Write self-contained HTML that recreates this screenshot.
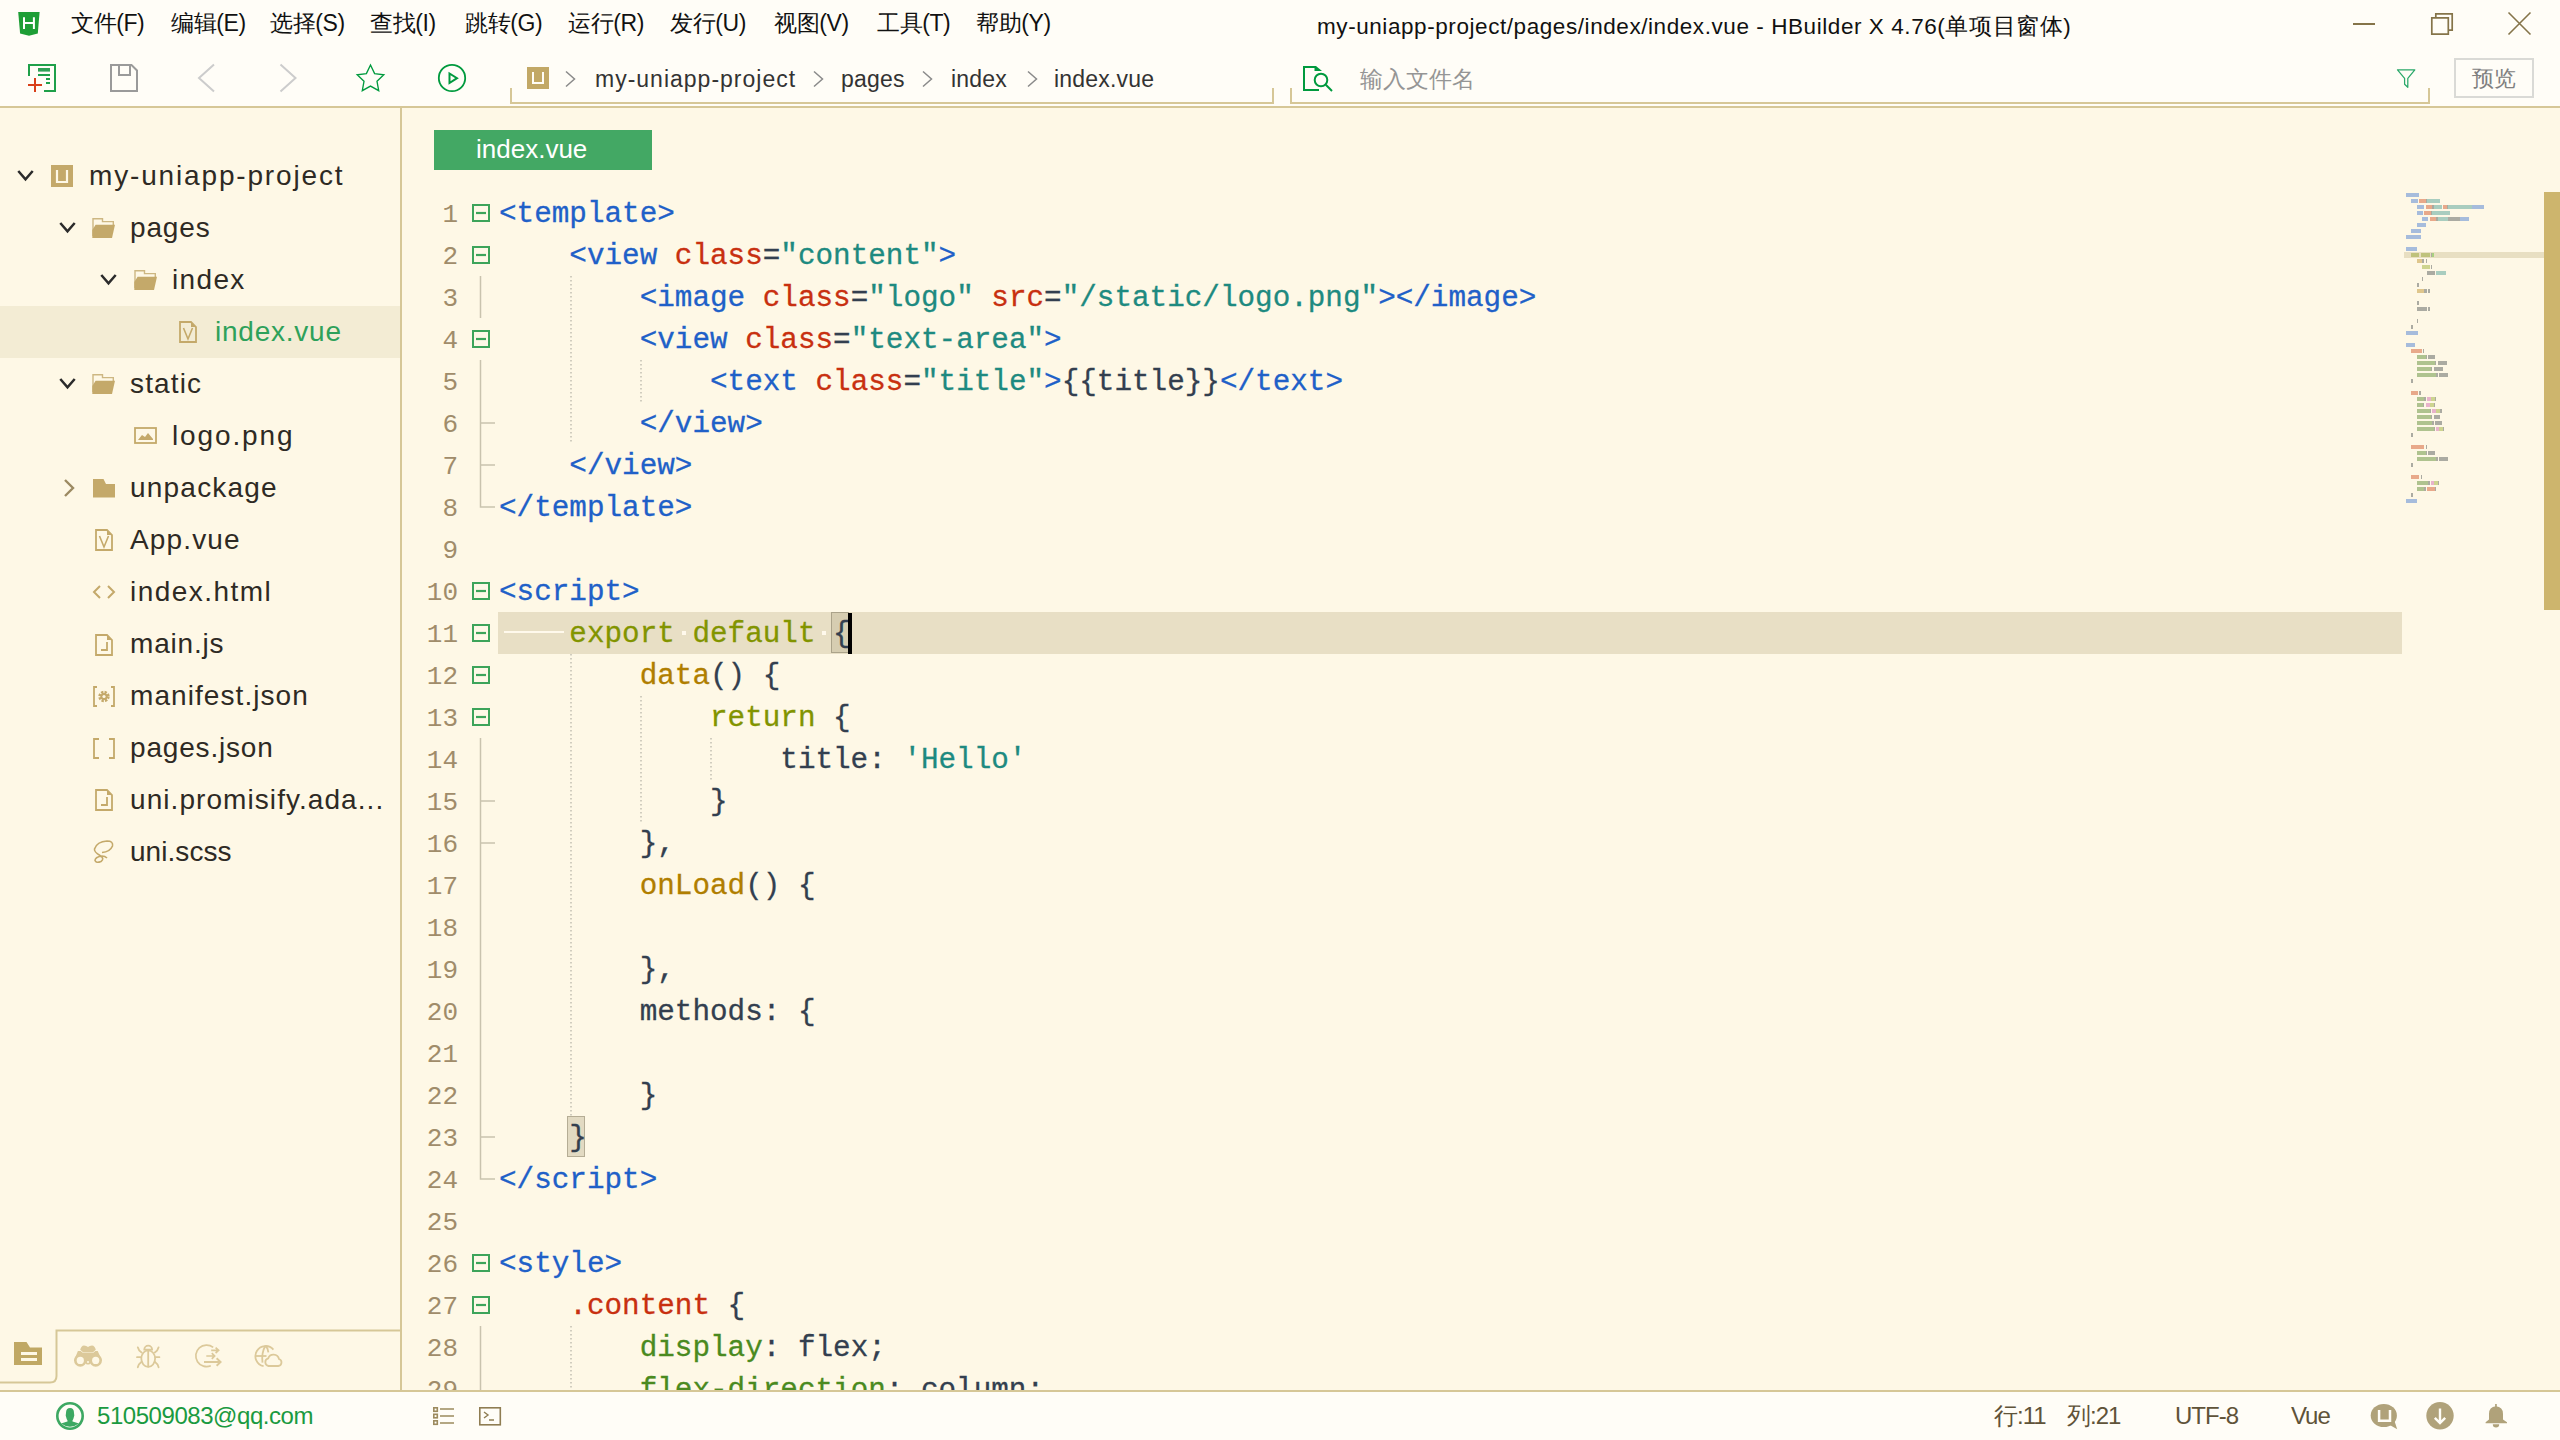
<!DOCTYPE html><html><head><meta charset="utf-8"><style>
*{margin:0;padding:0;box-sizing:border-box}
html,body{width:2560px;height:1440px;overflow:hidden}
body{position:relative;background:#FFFDF7;font-family:"Liberation Sans",sans-serif;color:#222}
.a{position:absolute;white-space:pre}
svg{position:absolute;overflow:visible}
.menu{font-size:23px;line-height:30px;color:#111;top:8px;letter-spacing:-0.4px}
.code{position:absolute;white-space:pre;font-family:"Liberation Mono",monospace;font-size:29.3px;line-height:42px;left:499px;top:0;height:42px;padding-top:2px;-webkit-text-stroke:0.3px currentColor}
.ln{position:absolute;white-space:pre;font-family:"Liberation Mono",monospace;font-size:26px;line-height:42px;color:#A08C6A;text-align:right;width:80px;left:378px;padding-top:2px}
.tree{position:absolute;white-space:pre;font-size:28px;line-height:52px;color:#2E2A24;height:52px}
.tg{color:#2060C8}.at{color:#C83010}.st{color:#1E8A80}.pn{color:#333F4F}.kw{color:#829400}.fn{color:#B07E00}.pl{color:#333F4F}.cp{color:#4A8A20}
</style></head><body><div class="a" style="left:0;top:108px;width:2560px;height:1282px;background:#FEF8E6"></div><div class="a" style="left:0;top:106px;width:2560px;height:2px;background:#D6C797"></div><div class="a" style="left:400px;top:108px;width:2px;height:1282px;background:#D6C797"></div><div class="a" style="left:0;top:1390px;width:2560px;height:2px;background:#D6C797"></div><svg style="left:0;top:0" width="60" height="50"><path d="M18.2 12.1 L39.6 12.1 L37.8 33.6 L29 35.8 L20.1 33.6 Z" fill="#1E9E36"/><path d="M24 17.2 V28.9 M33.9 17.2 V28.9 M24 23.1 H33.9" stroke="#fff" stroke-width="2" fill="none"/></svg><div class="a menu" style="left:71px">文件(F)</div><div class="a menu" style="left:171px">编辑(E)</div><div class="a menu" style="left:270px">选择(S)</div><div class="a menu" style="left:370px">查找(I)</div><div class="a menu" style="left:465px">跳转(G)</div><div class="a menu" style="left:568px">运行(R)</div><div class="a menu" style="left:670px">发行(U)</div><div class="a menu" style="left:774px">视图(V)</div><div class="a menu" style="left:877px">工具(T)</div><div class="a menu" style="left:976px">帮助(Y)</div><div class="a" style="left:1317px;top:11.5px;font-size:22.5px;line-height:30px;color:#111;letter-spacing:0.57px">my-uniapp-project/pages/index/index.vue - HBuilder X 4.76(单项目窗体)</div><svg style="left:0;top:0" width="2560" height="50"><path d="M2353 24 H2375" stroke="#857449" stroke-width="2"/><path d="M2431.8 17.8 H2448.3 V34.2 H2431.8 Z" stroke="#857449" stroke-width="1.7" fill="none"/><path d="M2435.8 17.8 V13.8 H2452.2 V30.2 H2448.3" stroke="#857449" stroke-width="1.7" fill="none"/><path d="M2508.5 12.5 L2530.5 34.5 M2530.5 12.5 L2508.5 34.5" stroke="#857449" stroke-width="1.6"/></svg><svg style="left:0;top:0" width="2560" height="106"><path d="M29 76 V65 H55 V91 H44" stroke="#1FA04A" stroke-width="2" fill="none"/><rect x="38" y="68" width="12" height="3.6" fill="#2EA055"/><rect x="38" y="74" width="12" height="2" fill="#1FA04A"/><rect x="46" y="78" width="4" height="2" fill="#1FA04A"/><rect x="46" y="82" width="4" height="2" fill="#1FA04A"/><path d="M28 85 H42 M35 78 V92" stroke="#D9401A" stroke-width="2"/><path d="M111 65 H131.5 L137 70.5 V91 H111 Z" stroke="#9A9A9A" stroke-width="2" fill="none"/><path d="M119 65 V75 H130 V65" stroke="#9A9A9A" stroke-width="2" fill="none"/><path d="M214 64.5 L199 78 L214 91.5" stroke="#CCCCCC" stroke-width="2" fill="none"/><path d="M280.5 64.5 L295.5 78 L280.5 91.5" stroke="#CCCCCC" stroke-width="2" fill="none"/><path d="M370.5 65 L374.6 73.6 L383.8 74.8 L377 81.3 L378.7 90.7 L370.5 86.1 L362.3 90.7 L364 81.3 L357.2 74.8 L366.4 73.6 Z" stroke="#009A3E" stroke-width="1.35" fill="none" stroke-linejoin="miter"/><circle cx="452" cy="78" r="13.2" stroke="#009A3E" stroke-width="1.8" fill="none"/><path d="M449.5 73.5 V83 L457 78.2 Z" stroke="#009A3E" stroke-width="2" fill="none" stroke-linejoin="miter"/><path d="M511 88 V103 H1273 V88" stroke="#D6C797" stroke-width="2" fill="none"/><rect x="527" y="67" width="22" height="22" fill="#C2A866"/><path d="M533 72 V83 H543 V72" stroke="#FFFDF7" stroke-width="2" fill="none"/><path d="M1291 88 V103 H2429 V88" stroke="#D6C797" stroke-width="2" fill="none"/><path d="M1319 90 H1304 V67 H1315" stroke="#009A3E" stroke-width="2" fill="none"/><path d="M1314.5 66 H1316 L1322 71 H1314.5 Z" fill="#009A3E"/><circle cx="1321" cy="80" r="6.3" stroke="#009A3E" stroke-width="2" fill="none"/><path d="M1325.8 84.8 L1332 91" stroke="#009A3E" stroke-width="2"/><path d="M2397.5 69.8 H2414.8 L2407.8 78.3 V87.3 L2404.6 84.3 V78.3 Z" stroke="#2AA86A" stroke-width="1.25" fill="none" stroke-linejoin="round"/><rect x="2455" y="59" width="78" height="38" stroke="#DADAD6" stroke-width="2" fill="none"/></svg><svg style="left:0;top:0" width="10" height="10"><path d="M566.0 71.5 L574.5 79 L566.0 86.5" stroke="#8A8A8A" stroke-width="1.5" fill="none"/></svg><svg style="left:0;top:0" width="10" height="10"><path d="M814.0 71.5 L822.5 79 L814.0 86.5" stroke="#8A8A8A" stroke-width="1.5" fill="none"/></svg><svg style="left:0;top:0" width="10" height="10"><path d="M923.0 71.5 L931.5 79 L923.0 86.5" stroke="#8A8A8A" stroke-width="1.5" fill="none"/></svg><svg style="left:0;top:0" width="10" height="10"><path d="M1028.0 71.5 L1036.5 79 L1028.0 86.5" stroke="#8A8A8A" stroke-width="1.5" fill="none"/></svg><div class="a" style="left:595px;top:63.5px;font-size:23px;line-height:30px;color:#333;letter-spacing:1.00px">my-uniapp-project</div><div class="a" style="left:841px;top:63.5px;font-size:23px;line-height:30px;color:#333;letter-spacing:0.20px">pages</div><div class="a" style="left:951px;top:63.5px;font-size:23px;line-height:30px;color:#333;letter-spacing:0.20px">index</div><div class="a" style="left:1054px;top:63.5px;font-size:23px;line-height:30px;color:#333;letter-spacing:0.20px">index.vue</div><div class="a" style="left:1360px;top:65px;font-size:22.5px;line-height:30px;color:#959595">输入文件名</div><div class="a" style="left:2472px;top:64px;font-size:22px;line-height:30px;color:#808080">预览</div><div class="a" style="left:0;top:306px;width:400px;height:52px;background:#F3ECD4"></div><div class="tree" style="left:89px;top:150px;color:#2E2A24;letter-spacing:1.84px">my-uniapp-project</div><div class="tree" style="left:130px;top:202px;color:#2E2A24;letter-spacing:0.84px">pages</div><div class="tree" style="left:172px;top:254px;color:#2E2A24;letter-spacing:1.34px">index</div><div class="tree" style="left:215px;top:306px;color:#2EA15A;letter-spacing:0.77px">index.vue</div><div class="tree" style="left:130px;top:358px;color:#2E2A24;letter-spacing:1.15px">static</div><div class="tree" style="left:172px;top:410px;color:#2E2A24;letter-spacing:1.86px">logo.png</div><div class="tree" style="left:130px;top:462px;color:#2E2A24;letter-spacing:1.21px">unpackage</div><div class="tree" style="left:130px;top:514px;color:#2E2A24;letter-spacing:1.15px">App.vue</div><div class="tree" style="left:130px;top:566px;color:#2E2A24;letter-spacing:1.45px">index.html</div><div class="tree" style="left:130px;top:618px;color:#2E2A24;letter-spacing:0.82px">main.js</div><div class="tree" style="left:130px;top:670px;color:#2E2A24;letter-spacing:1.07px">manifest.json</div><div class="tree" style="left:130px;top:722px;color:#2E2A24;letter-spacing:0.82px">pages.json</div><div class="tree" style="left:130px;top:774px;color:#2E2A24;letter-spacing:1.07px">uni.promisify.ada...</div><div class="tree" style="left:130px;top:826px;color:#2E2A24;letter-spacing:0.05px">uni.scss</div><svg style="left:0;top:0" width="400" height="1000"><path d="M18.3 171.0 L25.5 179.4 L32.7 171.0" stroke="#2B2B2B" stroke-width="2.5" fill="none"/><rect x="51" y="165" width="22" height="22" fill="#C4A96A"/><path d="M57.0 170.0 V182.0 H67.0 V170.0" stroke="#FEF8E6" stroke-width="2.2" fill="none"/><path d="M60.3 223.0 L67.5 231.4 L74.7 223.0" stroke="#2B2B2B" stroke-width="2.5" fill="none"/><path d="M93.0 236.0 V218.7 H102.5 V221.6 H113.3 V225.0" stroke="#CDB782" stroke-width="1.4" fill="none"/><path d="M95.6 224.7 H115.0 L112.0 238.0 H92.3 V230.0 Z" fill="#C4A96A"/><path d="M101.3 275.0 L108.5 283.4 L115.7 275.0" stroke="#2B2B2B" stroke-width="2.5" fill="none"/><path d="M135.0 288.0 V270.7 H144.5 V273.6 H155.3 V277.0" stroke="#CDB782" stroke-width="1.4" fill="none"/><path d="M137.6 276.7 H157.0 L154.0 290.0 H134.3 V282.0 Z" fill="#C4A96A"/><path d="M180.0 322.0 H191.0 L196.0 327.0 V342.0 H180.0 Z" stroke="#C4A96A" stroke-width="1.8" fill="none"/><path d="M191.0 322.0 L196.0 327.0 H191.0 Z" fill="#C4A96A"/><path d="M183.5 328.0 L188.0 339.0 L192.5 328.0" stroke="#C4A96A" stroke-width="1.6" fill="none"/><path d="M60.3 379.0 L67.5 387.4 L74.7 379.0" stroke="#2B2B2B" stroke-width="2.5" fill="none"/><path d="M93.0 392.0 V374.7 H102.5 V377.6 H113.3 V381.0" stroke="#CDB782" stroke-width="1.4" fill="none"/><path d="M95.6 380.7 H115.0 L112.0 394.0 H92.3 V386.0 Z" fill="#C4A96A"/><rect x="135.0" y="428.0" width="21" height="15" stroke="#C4A96A" stroke-width="1.8" fill="none"/><path d="M138.0 440.0 L142.0 435.0 L145.0 437.0 L148.0 433.0 L153.0 439.0 V440.0 H138.0 Z" fill="#C4A96A"/><path d="M65.0 480.0 L73.0 488.0 L65.0 496.0" stroke="#9C8A62" stroke-width="2.4" fill="none"/><path d="M93.0 479.0 H103.5 L106.0 484.0 H115.0 V497.5 H93.0 Z" fill="#C4A96A"/><path d="M96.0 530.0 H107.0 L112.0 535.0 V550.0 H96.0 Z" stroke="#C4A96A" stroke-width="1.8" fill="none"/><path d="M107.0 530.0 L112.0 535.0 H107.0 Z" fill="#C4A96A"/><path d="M99.5 536.0 L104.0 547.0 L108.5 536.0" stroke="#C4A96A" stroke-width="1.6" fill="none"/><path d="M100.0 586.0 L94.0 592.0 L100.0 598.0 M108.0 586.0 L114.0 592.0 L108.0 598.0" stroke="#C4A96A" stroke-width="2" fill="none"/><path d="M96.0 635.0 H107.0 L112.0 640.0 V655.0 H96.0 Z" stroke="#C4A96A" stroke-width="1.8" fill="none"/><path d="M107.0 635.0 L112.0 640.0 H107.0 Z" fill="#C4A96A"/><path d="M107.0 642.0 V650.0 H101.0" stroke="#C4A96A" stroke-width="1.8" fill="none"/><path d="M97.0 687.0 H94.0 V706.0 H97.0 M111.0 687.0 H114.0 V706.0 H111.0" stroke="#C4A96A" stroke-width="1.8" fill="none"/><circle cx="104.0" cy="696.5" r="4.2" fill="none" stroke="#C4A96A" stroke-width="3" stroke-dasharray="2.2 1.1"/><circle cx="104.0" cy="696.5" r="3.6" fill="#C4A96A"/><circle cx="104.0" cy="696.5" r="1.6" fill="#FEF8E6"/><path d="M99.0 739.0 H94.0 V758.0 H99.0 M109.0 739.0 H114.0 V758.0 H109.0" stroke="#C4A96A" stroke-width="1.8" fill="none"/><path d="M96.0 790.0 H107.0 L112.0 795.0 V810.0 H96.0 Z" stroke="#C4A96A" stroke-width="1.8" fill="none"/><path d="M107.0 790.0 L112.0 795.0 H107.0 Z" fill="#C4A96A"/><path d="M107.0 797.0 V805.0 H101.0" stroke="#C4A96A" stroke-width="1.8" fill="none"/><path d="M102 852.5 Q110 852 112.5 846 Q113.5 841 107 841 Q97 841.5 94.5 849 Q94 852 100 855.5 Q105 858.5 101 861.5 Q96 863.5 95 860.5 Q95 857 102 856 Q105 856 107 858" stroke="#C4A96A" stroke-width="1.6" fill="none"/></svg><svg style="left:0;top:0" width="402" height="1400"><path d="M0 1382.5 H50 Q56.5 1382.5 56.5 1376 V1330.5 H400" stroke="#D6C797" stroke-width="2" fill="none"/><path d="M14 1342 H26.5 L30 1347.5 H42 V1365 H14 Z" fill="#C0A864"/><rect x="21" y="1352" width="16" height="3" fill="#FEF8E6"/><rect x="21" y="1358" width="16" height="3" fill="#FEF8E6"/><g fill="#DCC99A"><path d="M77.9 1351 H82.5 L85.5 1353.6 H90.5 L93.5 1351 H97.7 L102 1360.4 H74 Z"/><circle cx="80.3" cy="1360.4" r="6.3"/><circle cx="95.7" cy="1360.4" r="6.3"/><rect x="80" y="1353" width="16" height="9"/><circle cx="88" cy="1362" r="2.6"/><path d="M80.2 1349.8 Q81.2 1345.5 84 1345.4 Q86.5 1345.6 88 1347 Q89.5 1345.6 92 1345.4 Q94.8 1345.5 95.8 1349.8 L92.7 1352.4 H83.3 Z" stroke="#FEF8E6" stroke-width="1.4" paint-order="stroke"/></g><g fill="#FEF8E6"><circle cx="80.3" cy="1360.4" r="3.6"/><circle cx="95.7" cy="1360.4" r="3.6"/><circle cx="88" cy="1361.9" r="1"/></g><g fill="none" stroke="#DCC99A" stroke-width="1.8" stroke-linecap="round"><ellipse cx="148.2" cy="1358.6" rx="6.9" ry="8.3"/><path d="M148.2 1351 V1366.5"/><path d="M144.3 1349.6 A3.9 3.9 0 0 1 152.1 1349.6 Z"/><path d="M137.8 1347.3 Q138.5 1350.5 141.6 1352.6 M158.6 1347.3 Q157.9 1350.5 154.8 1352.6 M137 1357.2 H140.8 M155.6 1357.2 H159.4 M137.8 1367.3 Q138.5 1364 141.6 1361.8 M158.6 1367.3 Q157.9 1364 154.8 1361.8"/></g><g fill="none" stroke="#DCC99A" stroke-width="1.7"><path d="M213.2 1347.3 A10.8 10.8 0 1 0 210.8 1365.8"/><path d="M211.2 1350.3 H218.6 M215.6 1347.6 L218.6 1350.3 L215.6 1353 M206.3 1356 H214.6 M211.8 1353.2 L214.6 1356 L211.8 1358.8"/><path d="M204 1362 H220.6 M216.6 1358.2 L220.6 1362 L216.6 1365.8" stroke-width="1.9"/></g><g fill="none" stroke="#DCC99A" stroke-width="1.8"><path d="M273.4 1349.6 A10.2 10.2 0 1 0 263.6 1366.2"/><path d="M255.8 1356 H266.5"/><path d="M265.2 1346 Q261.3 1353 262.5 1362.6 M265.6 1346 Q268 1348 268.4 1352.4"/><path d="M268.5 1366 H278.2 A3.6 3.6 0 0 0 279 1359 A5.6 5.6 0 0 0 268.2 1358.4 A3.9 3.9 0 0 0 268.5 1366 Z"/></g></svg><div class="a" style="left:434px;top:130px;width:218px;height:40px;background:#43A864"></div><div class="a" style="left:476px;top:134px;font-size:26px;line-height:30px;color:#fff">index.vue</div><div class="a" style="left:498px;top:612px;width:1904px;height:42px;background:#E8DFC5"></div><div class="a" style="left:831px;top:612px;width:18px;height:41px;background:#D6CDB1;border:1px solid #ABA38A"></div><div class="a" style="left:567px;top:1116px;width:18px;height:41px;background:#E2DAC2;border:1px solid #B5AD95"></div><div class="a" style="left:0;top:0;width:2560px;height:1390px;overflow:hidden"><div class="ln" style="top:192px">1</div><div class="code" style="top:192px"><span class="tg">&lt;template&gt;</span></div><div class="ln" style="top:234px">2</div><div class="code" style="top:234px"><span class="pl">    </span><span class="tg">&lt;view </span><span class="at">class</span><span class="pn">=</span><span class="st">"content"</span><span class="tg">&gt;</span></div><div class="ln" style="top:276px">3</div><div class="code" style="top:276px"><span class="pl">        </span><span class="tg">&lt;image </span><span class="at">class</span><span class="pn">=</span><span class="st">"logo" </span><span class="at">src</span><span class="pn">=</span><span class="st">"/static/logo.png"</span><span class="tg">&gt;&lt;/image&gt;</span></div><div class="ln" style="top:318px">4</div><div class="code" style="top:318px"><span class="pl">        </span><span class="tg">&lt;view </span><span class="at">class</span><span class="pn">=</span><span class="st">"text-area"</span><span class="tg">&gt;</span></div><div class="ln" style="top:360px">5</div><div class="code" style="top:360px"><span class="pl">            </span><span class="tg">&lt;text </span><span class="at">class</span><span class="pn">=</span><span class="st">"title"</span><span class="tg">&gt;</span><span class="pl">{{title}}</span><span class="tg">&lt;/text&gt;</span></div><div class="ln" style="top:402px">6</div><div class="code" style="top:402px"><span class="pl">        </span><span class="tg">&lt;/view&gt;</span></div><div class="ln" style="top:444px">7</div><div class="code" style="top:444px"><span class="pl">    </span><span class="tg">&lt;/view&gt;</span></div><div class="ln" style="top:486px">8</div><div class="code" style="top:486px"><span class="tg">&lt;/template&gt;</span></div><div class="ln" style="top:528px">9</div><div class="ln" style="top:570px">10</div><div class="code" style="top:570px"><span class="tg">&lt;script&gt;</span></div><div class="ln" style="top:612px">11</div><div class="code" style="top:612px"><span class="pl">    </span><span class="kw">export</span><span class="pl"> </span><span class="kw">default</span><span class="pl"> {</span></div><div class="ln" style="top:654px">12</div><div class="code" style="top:654px"><span class="pl">        </span><span class="fn">data</span><span class="pl">() {</span></div><div class="ln" style="top:696px">13</div><div class="code" style="top:696px"><span class="pl">            </span><span class="kw">return</span><span class="pl"> {</span></div><div class="ln" style="top:738px">14</div><div class="code" style="top:738px"><span class="pl">                title: </span><span class="st">'Hello'</span></div><div class="ln" style="top:780px">15</div><div class="code" style="top:780px"><span class="pl">            }</span></div><div class="ln" style="top:822px">16</div><div class="code" style="top:822px"><span class="pl">        },</span></div><div class="ln" style="top:864px">17</div><div class="code" style="top:864px"><span class="pl">        </span><span class="fn">onLoad</span><span class="pl">() {</span></div><div class="ln" style="top:906px">18</div><div class="ln" style="top:948px">19</div><div class="code" style="top:948px"><span class="pl">        },</span></div><div class="ln" style="top:990px">20</div><div class="code" style="top:990px"><span class="pl">        methods: {</span></div><div class="ln" style="top:1032px">21</div><div class="ln" style="top:1074px">22</div><div class="code" style="top:1074px"><span class="pl">        }</span></div><div class="ln" style="top:1116px">23</div><div class="code" style="top:1116px"><span class="pl">    }</span></div><div class="ln" style="top:1158px">24</div><div class="code" style="top:1158px"><span class="tg">&lt;/script&gt;</span></div><div class="ln" style="top:1200px">25</div><div class="ln" style="top:1242px">26</div><div class="code" style="top:1242px"><span class="tg">&lt;style&gt;</span></div><div class="ln" style="top:1284px">27</div><div class="code" style="top:1284px"><span class="pl">    </span><span class="at">.content</span><span class="pl"> {</span></div><div class="ln" style="top:1326px">28</div><div class="code" style="top:1326px"><span class="pl">        </span><span class="cp">display</span><span class="pl">: flex;</span></div><div class="ln" style="top:1368px">29</div><div class="code" style="top:1368px"><span class="pl">        </span><span class="cp">flex-direction</span><span class="pl">: column;</span></div></div><div class="a" style="left:848px;top:613px;width:4px;height:41px;background:#000"></div><div class="a" style="left:504px;top:631px;width:60px;height:2px;background:#FFF9EC"></div><div class="a" style="left:682px;top:631px;width:4px;height:4px;background:#FFF9EC"></div><div class="a" style="left:822px;top:631px;width:4px;height:4px;background:#FFF9EC"></div><svg style="left:0;top:0" width="2560" height="1390"><rect x="473" y="205" width="16" height="16" stroke="#3DA45A" stroke-width="2" fill="none"/><path d="M476 213 H486" stroke="#3DA45A" stroke-width="2.2"/><rect x="473" y="247" width="16" height="16" stroke="#3DA45A" stroke-width="2" fill="none"/><path d="M476 255 H486" stroke="#3DA45A" stroke-width="2.2"/><rect x="473" y="331" width="16" height="16" stroke="#3DA45A" stroke-width="2" fill="none"/><path d="M476 339 H486" stroke="#3DA45A" stroke-width="2.2"/><rect x="473" y="583" width="16" height="16" stroke="#3DA45A" stroke-width="2" fill="none"/><path d="M476 591 H486" stroke="#3DA45A" stroke-width="2.2"/><rect x="473" y="625" width="16" height="16" stroke="#3DA45A" stroke-width="2" fill="none"/><path d="M476 633 H486" stroke="#3DA45A" stroke-width="2.2"/><rect x="473" y="667" width="16" height="16" stroke="#3DA45A" stroke-width="2" fill="none"/><path d="M476 675 H486" stroke="#3DA45A" stroke-width="2.2"/><rect x="473" y="709" width="16" height="16" stroke="#3DA45A" stroke-width="2" fill="none"/><path d="M476 717 H486" stroke="#3DA45A" stroke-width="2.2"/><rect x="473" y="1255" width="16" height="16" stroke="#3DA45A" stroke-width="2" fill="none"/><path d="M476 1263 H486" stroke="#3DA45A" stroke-width="2.2"/><rect x="473" y="1297" width="16" height="16" stroke="#3DA45A" stroke-width="2" fill="none"/><path d="M476 1305 H486" stroke="#3DA45A" stroke-width="2.2"/><path d="M480.5 276 V318" stroke="#C9C3AE" stroke-width="1.5"/><path d="M480.5 360 V507 H495" stroke="#C9C3AE" stroke-width="1.5" fill="none"/><path d="M480.5 423 H495" stroke="#C9C3AE" stroke-width="1.5"/><path d="M480.5 465 H495" stroke="#C9C3AE" stroke-width="1.5"/><path d="M480.5 738 V1179 H495" stroke="#C9C3AE" stroke-width="1.5" fill="none"/><path d="M480.5 801 H495" stroke="#C9C3AE" stroke-width="1.5"/><path d="M480.5 843 H495" stroke="#C9C3AE" stroke-width="1.5"/><path d="M480.5 1137 H495" stroke="#C9C3AE" stroke-width="1.5"/><path d="M480.5 1326 V1390" stroke="#C9C3AE" stroke-width="1.5"/><path d="M571.0 276 V444" stroke="#C2BFB2" stroke-width="1.5" stroke-dasharray="1.5 2.5"/><path d="M641.0 360 V402" stroke="#C2BFB2" stroke-width="1.5" stroke-dasharray="1.5 2.5"/><path d="M571.0 654 V1116" stroke="#C2BFB2" stroke-width="1.5" stroke-dasharray="1.5 2.5"/><path d="M641.0 696 V822" stroke="#C2BFB2" stroke-width="1.5" stroke-dasharray="1.5 2.5"/><path d="M711.0 738 V780" stroke="#C2BFB2" stroke-width="1.5" stroke-dasharray="1.5 2.5"/><path d="M571 1326 V1390" stroke="#C2BFB2" stroke-width="1.5" stroke-dasharray="1.5 2.5"/></svg><div class="a" style="left:2404px;top:252px;width:140px;height:6px;background:#E8DFC2"></div><div class="a" style="left:2406.00px;top:193px;width:13.20px;height:4px;background:#A6BCDC"></div><div class="a" style="left:2411.28px;top:199px;width:6.60px;height:4px;background:#A6BCDC"></div><div class="a" style="left:2419.20px;top:199px;width:6.60px;height:4px;background:#E8A98A"></div><div class="a" style="left:2425.80px;top:199px;width:1.32px;height:4px;background:#A9A99E"></div><div class="a" style="left:2427.12px;top:199px;width:13.20px;height:4px;background:#A9CDBF"></div><div class="a" style="left:2416.56px;top:205px;width:7.92px;height:4px;background:#A6BCDC"></div><div class="a" style="left:2425.80px;top:205px;width:6.60px;height:4px;background:#E8A98A"></div><div class="a" style="left:2432.40px;top:205px;width:1.32px;height:4px;background:#A9A99E"></div><div class="a" style="left:2433.72px;top:205px;width:7.92px;height:4px;background:#A9CDBF"></div><div class="a" style="left:2442.96px;top:205px;width:3.96px;height:4px;background:#E8A98A"></div><div class="a" style="left:2446.92px;top:205px;width:1.32px;height:4px;background:#A9A99E"></div><div class="a" style="left:2448.24px;top:205px;width:23.76px;height:4px;background:#A9CDBF"></div><div class="a" style="left:2472.00px;top:205px;width:11.88px;height:4px;background:#A6BCDC"></div><div class="a" style="left:2416.56px;top:211px;width:6.60px;height:4px;background:#A6BCDC"></div><div class="a" style="left:2424.48px;top:211px;width:6.60px;height:4px;background:#E8A98A"></div><div class="a" style="left:2431.08px;top:211px;width:1.32px;height:4px;background:#A9A99E"></div><div class="a" style="left:2432.40px;top:211px;width:17.16px;height:4px;background:#A9CDBF"></div><div class="a" style="left:2421.84px;top:217px;width:6.60px;height:4px;background:#A6BCDC"></div><div class="a" style="left:2429.76px;top:217px;width:6.60px;height:4px;background:#E8A98A"></div><div class="a" style="left:2436.36px;top:217px;width:1.32px;height:4px;background:#A9A99E"></div><div class="a" style="left:2437.68px;top:217px;width:10.56px;height:4px;background:#A9CDBF"></div><div class="a" style="left:2448.24px;top:217px;width:11.88px;height:4px;background:#ABABA2"></div><div class="a" style="left:2460.12px;top:217px;width:9.24px;height:4px;background:#A6BCDC"></div><div class="a" style="left:2416.56px;top:223px;width:9.24px;height:4px;background:#A6BCDC"></div><div class="a" style="left:2411.28px;top:229px;width:9.24px;height:4px;background:#A6BCDC"></div><div class="a" style="left:2406.00px;top:235px;width:14.52px;height:4px;background:#A6BCDC"></div><div class="a" style="left:2406.00px;top:247px;width:10.56px;height:4px;background:#A6BCDC"></div><div class="a" style="left:2411.28px;top:253px;width:7.92px;height:4px;background:#BFC27C"></div><div class="a" style="left:2420.52px;top:253px;width:9.24px;height:4px;background:#BFC27C"></div><div class="a" style="left:2431.08px;top:253px;width:1.32px;height:4px;background:#ABABA2"></div><div class="a" style="left:2432.40px;top:253px;width:1.32px;height:4px;background:#A9D080"></div><div class="a" style="left:2416.56px;top:259px;width:5.28px;height:4px;background:#DFC68C"></div><div class="a" style="left:2421.84px;top:259px;width:2.64px;height:4px;background:#ABABA2"></div><div class="a" style="left:2425.80px;top:259px;width:1.32px;height:4px;background:#ABABA2"></div><div class="a" style="left:2421.84px;top:265px;width:7.92px;height:4px;background:#CDD48F"></div><div class="a" style="left:2431.08px;top:265px;width:1.32px;height:4px;background:#ABABA2"></div><div class="a" style="left:2427.12px;top:271px;width:7.92px;height:4px;background:#ABABA2"></div><div class="a" style="left:2436.36px;top:271px;width:9.24px;height:4px;background:#A9CDBF"></div><div class="a" style="left:2421.84px;top:277px;width:1.32px;height:4px;background:#ABABA2"></div><div class="a" style="left:2416.56px;top:283px;width:2.64px;height:4px;background:#ABABA2"></div><div class="a" style="left:2416.56px;top:289px;width:7.92px;height:4px;background:#DFC68C"></div><div class="a" style="left:2424.48px;top:289px;width:2.64px;height:4px;background:#ABABA2"></div><div class="a" style="left:2428.44px;top:289px;width:1.32px;height:4px;background:#ABABA2"></div><div class="a" style="left:2416.56px;top:301px;width:2.64px;height:4px;background:#ABABA2"></div><div class="a" style="left:2416.56px;top:307px;width:10.56px;height:4px;background:#ABABA2"></div><div class="a" style="left:2428.44px;top:307px;width:1.32px;height:4px;background:#ABABA2"></div><div class="a" style="left:2416.56px;top:319px;width:1.32px;height:4px;background:#ABABA2"></div><div class="a" style="left:2411.28px;top:325px;width:1.32px;height:4px;background:#ABABA2"></div><div class="a" style="left:2406.00px;top:331px;width:11.88px;height:4px;background:#A6BCDC"></div><div class="a" style="left:2406.00px;top:343px;width:9.24px;height:4px;background:#A6BCDC"></div><div class="a" style="left:2411.28px;top:349px;width:10.56px;height:4px;background:#E8A98A"></div><div class="a" style="left:2423.16px;top:349px;width:1.32px;height:4px;background:#ABABA2"></div><div class="a" style="left:2416.56px;top:355px;width:9.24px;height:4px;background:#AFC38F"></div><div class="a" style="left:2425.80px;top:355px;width:1.32px;height:4px;background:#ABABA2"></div><div class="a" style="left:2428.44px;top:355px;width:6.60px;height:4px;background:#ABABA2"></div><div class="a" style="left:2416.56px;top:361px;width:18.48px;height:4px;background:#AFC38F"></div><div class="a" style="left:2435.04px;top:361px;width:1.32px;height:4px;background:#ABABA2"></div><div class="a" style="left:2437.68px;top:361px;width:9.24px;height:4px;background:#ABABA2"></div><div class="a" style="left:2416.56px;top:367px;width:14.52px;height:4px;background:#AFC38F"></div><div class="a" style="left:2431.08px;top:367px;width:1.32px;height:4px;background:#ABABA2"></div><div class="a" style="left:2433.72px;top:367px;width:9.24px;height:4px;background:#ABABA2"></div><div class="a" style="left:2416.56px;top:373px;width:19.80px;height:4px;background:#AFC38F"></div><div class="a" style="left:2436.36px;top:373px;width:1.32px;height:4px;background:#ABABA2"></div><div class="a" style="left:2439.00px;top:373px;width:9.24px;height:4px;background:#ABABA2"></div><div class="a" style="left:2411.28px;top:379px;width:1.32px;height:4px;background:#ABABA2"></div><div class="a" style="left:2411.28px;top:391px;width:6.60px;height:4px;background:#E8A98A"></div><div class="a" style="left:2419.20px;top:391px;width:1.32px;height:4px;background:#ABABA2"></div><div class="a" style="left:2416.56px;top:397px;width:7.92px;height:4px;background:#AFC38F"></div><div class="a" style="left:2424.48px;top:397px;width:1.32px;height:4px;background:#ABABA2"></div><div class="a" style="left:2427.12px;top:397px;width:3.96px;height:4px;background:#E8B3CB"></div><div class="a" style="left:2431.08px;top:397px;width:3.96px;height:4px;background:#CDD48F"></div><div class="a" style="left:2435.04px;top:397px;width:1.32px;height:4px;background:#ABABA2"></div><div class="a" style="left:2416.56px;top:403px;width:6.60px;height:4px;background:#AFC38F"></div><div class="a" style="left:2423.16px;top:403px;width:1.32px;height:4px;background:#ABABA2"></div><div class="a" style="left:2425.80px;top:403px;width:3.96px;height:4px;background:#E8B3CB"></div><div class="a" style="left:2429.76px;top:403px;width:3.96px;height:4px;background:#CDD48F"></div><div class="a" style="left:2433.72px;top:403px;width:1.32px;height:4px;background:#ABABA2"></div><div class="a" style="left:2416.56px;top:409px;width:13.20px;height:4px;background:#AFC38F"></div><div class="a" style="left:2429.76px;top:409px;width:1.32px;height:4px;background:#ABABA2"></div><div class="a" style="left:2432.40px;top:409px;width:3.96px;height:4px;background:#E8B3CB"></div><div class="a" style="left:2436.36px;top:409px;width:3.96px;height:4px;background:#CDD48F"></div><div class="a" style="left:2440.32px;top:409px;width:1.32px;height:4px;background:#ABABA2"></div><div class="a" style="left:2416.56px;top:415px;width:14.52px;height:4px;background:#AFC38F"></div><div class="a" style="left:2431.08px;top:415px;width:1.32px;height:4px;background:#ABABA2"></div><div class="a" style="left:2433.72px;top:415px;width:5.28px;height:4px;background:#ABABA2"></div><div class="a" style="left:2439.00px;top:415px;width:1.32px;height:4px;background:#ABABA2"></div><div class="a" style="left:2416.56px;top:421px;width:15.84px;height:4px;background:#AFC38F"></div><div class="a" style="left:2432.40px;top:421px;width:1.32px;height:4px;background:#ABABA2"></div><div class="a" style="left:2435.04px;top:421px;width:5.28px;height:4px;background:#ABABA2"></div><div class="a" style="left:2440.32px;top:421px;width:1.32px;height:4px;background:#ABABA2"></div><div class="a" style="left:2416.56px;top:427px;width:17.16px;height:4px;background:#AFC38F"></div><div class="a" style="left:2433.72px;top:427px;width:1.32px;height:4px;background:#ABABA2"></div><div class="a" style="left:2436.36px;top:427px;width:2.64px;height:4px;background:#E8B3CB"></div><div class="a" style="left:2439.00px;top:427px;width:3.96px;height:4px;background:#CDD48F"></div><div class="a" style="left:2442.96px;top:427px;width:1.32px;height:4px;background:#ABABA2"></div><div class="a" style="left:2411.28px;top:433px;width:1.32px;height:4px;background:#ABABA2"></div><div class="a" style="left:2411.28px;top:445px;width:13.20px;height:4px;background:#E8A98A"></div><div class="a" style="left:2425.80px;top:445px;width:1.32px;height:4px;background:#ABABA2"></div><div class="a" style="left:2416.56px;top:451px;width:9.24px;height:4px;background:#AFC38F"></div><div class="a" style="left:2425.80px;top:451px;width:1.32px;height:4px;background:#ABABA2"></div><div class="a" style="left:2428.44px;top:451px;width:5.28px;height:4px;background:#ABABA2"></div><div class="a" style="left:2433.72px;top:451px;width:1.32px;height:4px;background:#ABABA2"></div><div class="a" style="left:2416.56px;top:457px;width:19.80px;height:4px;background:#AFC38F"></div><div class="a" style="left:2436.36px;top:457px;width:1.32px;height:4px;background:#ABABA2"></div><div class="a" style="left:2439.00px;top:457px;width:7.92px;height:4px;background:#ABABA2"></div><div class="a" style="left:2446.92px;top:457px;width:1.32px;height:4px;background:#ABABA2"></div><div class="a" style="left:2411.28px;top:463px;width:1.32px;height:4px;background:#ABABA2"></div><div class="a" style="left:2411.28px;top:475px;width:7.92px;height:4px;background:#E8A98A"></div><div class="a" style="left:2420.52px;top:475px;width:1.32px;height:4px;background:#ABABA2"></div><div class="a" style="left:2416.56px;top:481px;width:11.88px;height:4px;background:#AFC38F"></div><div class="a" style="left:2428.44px;top:481px;width:1.32px;height:4px;background:#ABABA2"></div><div class="a" style="left:2431.08px;top:481px;width:2.64px;height:4px;background:#E8B3CB"></div><div class="a" style="left:2433.72px;top:481px;width:3.96px;height:4px;background:#CDD48F"></div><div class="a" style="left:2437.68px;top:481px;width:1.32px;height:4px;background:#ABABA2"></div><div class="a" style="left:2416.56px;top:487px;width:7.92px;height:4px;background:#AFC38F"></div><div class="a" style="left:2424.48px;top:487px;width:1.32px;height:4px;background:#ABABA2"></div><div class="a" style="left:2427.12px;top:487px;width:7.92px;height:4px;background:#E8A98A"></div><div class="a" style="left:2435.04px;top:487px;width:1.32px;height:4px;background:#ABABA2"></div><div class="a" style="left:2411.28px;top:493px;width:1.32px;height:4px;background:#ABABA2"></div><div class="a" style="left:2406.00px;top:499px;width:10.56px;height:4px;background:#A6BCDC"></div><div class="a" style="left:2544px;top:192px;width:16px;height:418px;background:#CDB56D"></div><svg style="left:0;top:0" width="2560" height="1440"><circle cx="70" cy="1416" r="12.7" stroke="#3DA862" stroke-width="2.6" fill="none"/><path d="M66 1413 Q66 1408 70 1408 Q74 1408 74 1413 L74.3 1415.5 Q73.5 1419 72.5 1420.5 L72.5 1421.5 Q76 1422.5 78.8 1423.6 A13.9 13.9 0 0 1 61.2 1423.6 Q64 1422.5 67.5 1421.5 L67.5 1420.5 Q66.5 1419 65.7 1415.5 Z" fill="#3DA862"/><g fill="none" stroke="#9C8A5E" stroke-width="1.6"><rect x="433.8" y="1407.8" width="3.5" height="3.5"/><rect x="433.8" y="1414.3" width="3.5" height="3.5"/><rect x="433.8" y="1420.8" width="3.5" height="3.5"/><path d="M440 1409 H454 M440 1416 H454 M440 1423 H454"/></g><rect x="479.8" y="1407.8" width="20.5" height="17" stroke="#8F7D52" stroke-width="1.6" fill="none"/><path d="M484 1412 L488 1415 L484 1418 M489 1420 H494" stroke="#8F7D52" stroke-width="1.4" fill="none"/><ellipse cx="2383.8" cy="1415.5" rx="13.1" ry="11.6" fill="#B0A27A"/><path d="M2388 1424 L2397.2 1429.2 L2394.5 1421 Z" fill="#B0A27A"/><path d="M2379.1 1409.9 V1420.8 H2390 V1409.9" stroke="#FFFDF7" stroke-width="2.5" fill="none"/><circle cx="2440" cy="1415.8" r="13.7" fill="#B0A27A"/><path d="M2440 1408.6 V1423 M2434.8 1417.8 L2440 1423 L2445.2 1417.8" stroke="#FFFDF7" stroke-width="2.4" fill="none"/><path d="M2495.9 1406.3 Q2503 1406.8 2503 1414 V1419.6 L2507 1422.3 V1423.2 H2485.6 V1422.3 L2489 1419.6 V1414 Q2489 1406.8 2495.9 1406.3 Z" fill="#B0A27A"/><rect x="2495.1" y="1404" width="1.7" height="3" fill="#B0A27A"/><path d="M2492.8 1424.2 H2499.2 A3.2 3.2 0 0 1 2492.8 1424.2 Z" fill="#B0A27A"/></svg><div class="a" style="left:97px;top:1401px;font-size:24px;line-height:30px;color:#1A9A40;letter-spacing:-0.45px">510509083@qq.com</div><div class="a" style="left:1994px;top:1401px;font-size:24px;line-height:30px;color:#5F5339;letter-spacing:-1px">行:11</div><div class="a" style="left:2067px;top:1401px;font-size:24px;line-height:30px;color:#5F5339;letter-spacing:-1px">列:21</div><div class="a" style="left:2175px;top:1401px;font-size:24px;line-height:30px;color:#5F5339;letter-spacing:-1px">UTF-8</div><div class="a" style="left:2291px;top:1401px;font-size:24px;line-height:30px;color:#5F5339;letter-spacing:-1px">Vue</div></body></html>
